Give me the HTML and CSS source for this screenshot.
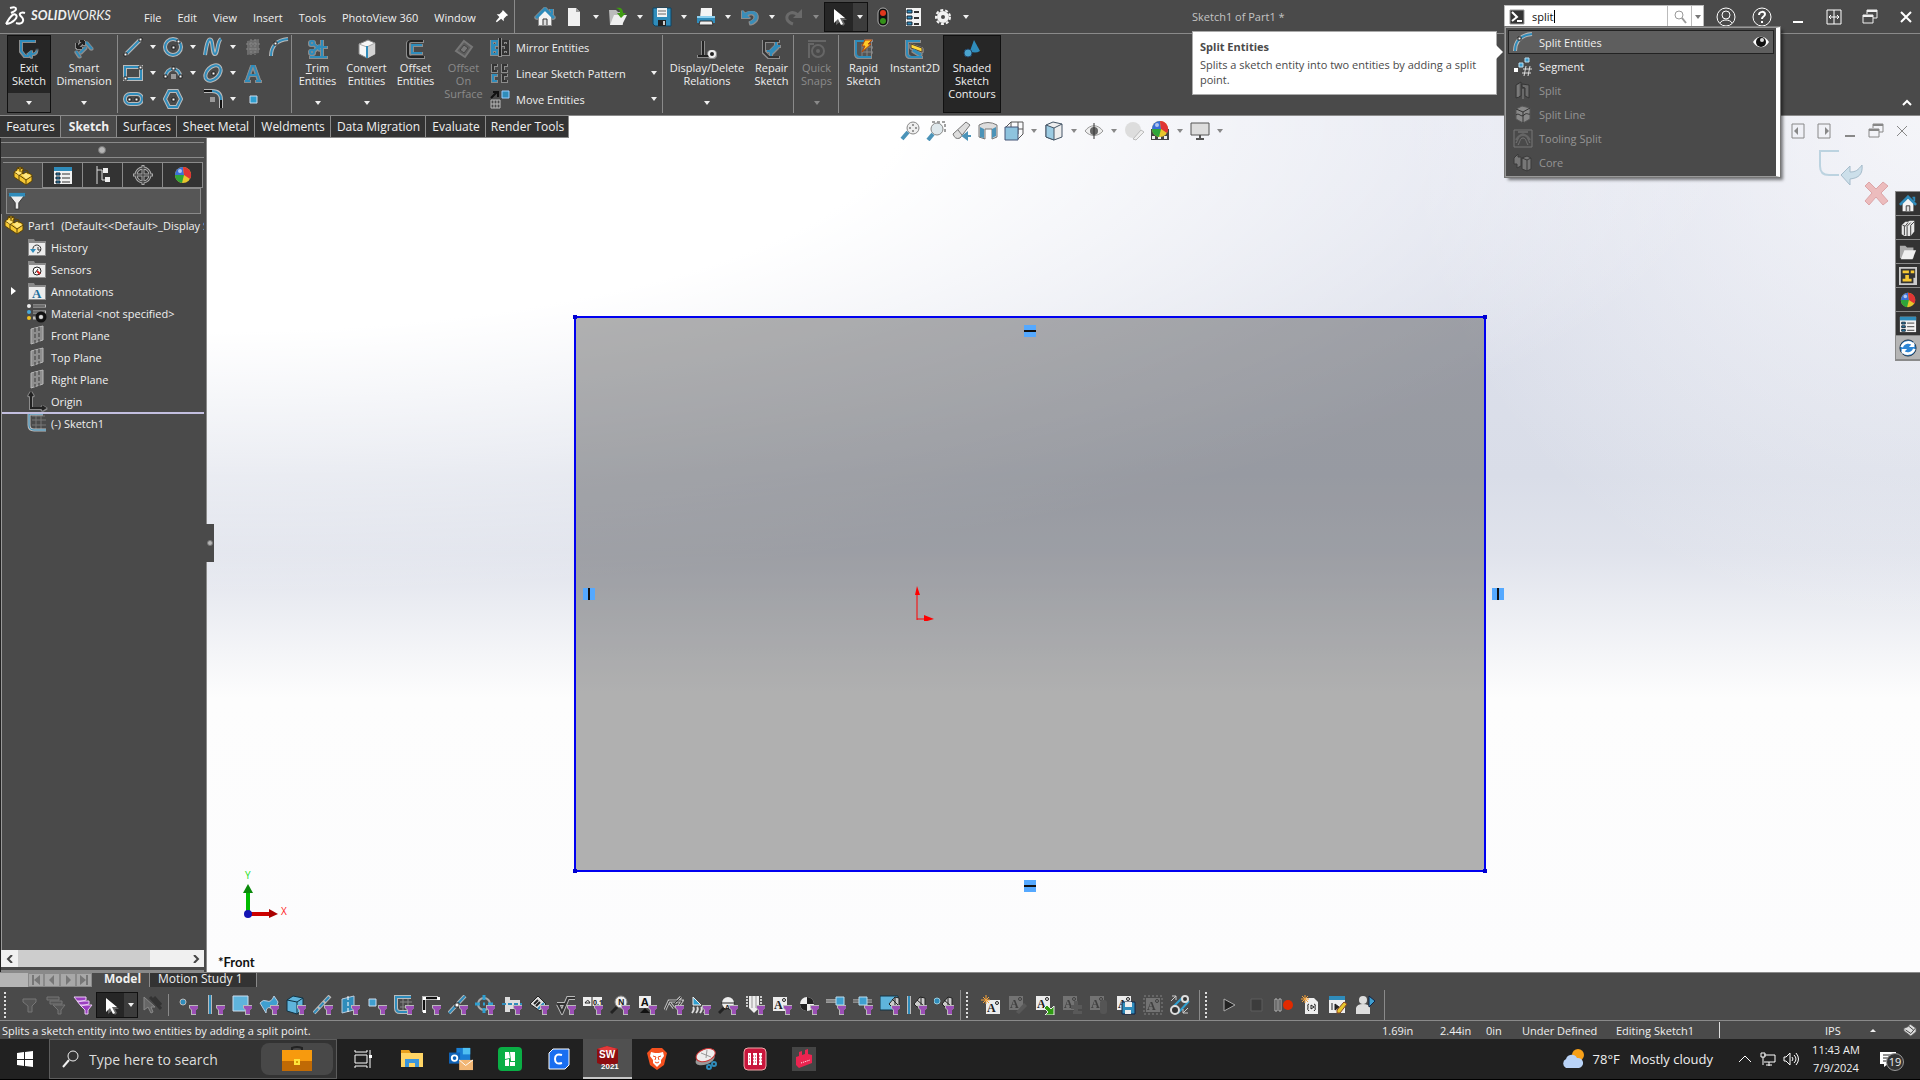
FILE: index.html
```html
<!DOCTYPE html>
<html lang="en">
<head>
  <meta charset="UTF-8">
  <meta name="viewport" content="width=device-width, initial-scale=1.0">
  <title>SOLIDWORKS - Sketch1 of Part1</title>
  <link rel="stylesheet" href="styles.css">
</head>
<body>
  <!-- icon sprite -->
  <svg class="sprite" width="0" height="0" aria-hidden="true">
    <symbol id="funnel" viewBox="0 0 20 20"><path d="M11 10h9v3l-2 2v5h-5v-5l-2-2z" fill="#b9b9b9"/><path d="M12 11h8v2l-2 2v4h-4v-4l-2-2z" fill="#9b4fb5"/></symbol>
    <symbol id="cursor" viewBox="0 0 20 20"><path d="M7 4v14l4-3 3 4 2-2-2-4h4z" fill="#666"/><path d="M5 2v14l4-4 3 6 2-1-3-6h5z" fill="#fff"/></symbol>
    <symbol id="house" viewBox="0 0 20 20"><path d="M4 9l6-6 6 6v9H4z" fill="#f4f4f4"/><path d="M8 18v-6h4v6" fill="#ddd" stroke="#333"/><path d="M1 11l9-9 9 9" fill="none" stroke="#2f8cbb" stroke-width="3"/><path d="M15 3h2v4" fill="none" stroke="#2f8cbb" stroke-width="2"/></symbol>
    <symbol id="part" viewBox="0 0 20 20"><path d="M1 6l3-2V2l3-1 3 1v6l4-2 5 3v6l-6 4L1 11z" fill="#f5c733" stroke="#5a4208"/><path d="M1 6l5 3 4-2M6 9v5M6 9l7 5 6-4M13 14v5M4 2l3 1 3-1M7 3v3M9 7V5l3-1 3 1v3l-3 1z" fill="none" stroke="#5a4208"/><path d="M2 6l3-1 4 2-3 2zM9 9l4-2 5 3-5 3z" fill="#ffe680"/></symbol>
    <symbol id="ball" viewBox="0 0 20 20"><circle cx="10" cy="10" r="8" fill="#e8c62c"/><path d="M2 10a8 8 0 0 1 8-8l1 8z" fill="#3a6fd8"/><path d="M2 10l9 0-2 8a8 8 0 0 1-7-8z" fill="#2fa53a"/><path d="M10 2a8 8 0 0 1 7 12l-6-4z" fill="#e03535"/><circle cx="7" cy="6" r="2" fill="#fff" opacity=".6"/></symbol>
    <symbol id="sheet" viewBox="0 0 20 20"><path d="M1 2h18v17H1z" fill="#f2f2f2"/><path d="M1 2h18v4H1z" fill="#2f8cbb"/><path d="M3 8h4v2H3zM3 12h4v2H3zM3 16h4v2H3z" fill="#2f8cbb" stroke="#123"/><path d="M9 9h8M9 13h8M9 17h8" stroke="#333"/></symbol>
    <symbol id="folder" viewBox="0 0 20 20"><path d="M1 5V2h6l1 2h11v15H1z" fill="#8a8a8a"/><path d="M2 6h16v12H2z" fill="#ececec"/></symbol>
    <symbol id="plane" viewBox="0 0 20 20"><path d="M4 4l12-3v14L4 19z" fill="#8e8e8e" stroke="#b8b8b8"/><path d="M8 3v15M12 2v15" stroke="#3a3a3a" stroke-dasharray="4 2"/></symbol>
    <symbol id="noteA" viewBox="0 0 20 20"><path d="M3 3h14v14H3z" fill="#ececec"/><text x="4" y="15" font-size="12" font-weight="bold" font-family="Liberation Serif" fill="#222">A</text><circle cx="14" cy="6" r="1.5" fill="none" stroke="#222"/></symbol>
    <symbol id="split" viewBox="0 0 20 20"><path d="M2 19C2 10 7 3 19 2" fill="none" stroke="#b8b8b8" stroke-width="4"/><path d="M2 19C2 10 7 3 19 2" fill="none" stroke="#2f8cbb" stroke-width="2"/><path d="M5 5h3v3H5z" fill="#fff" stroke="#222"/></symbol>
    <symbol id="restore" viewBox="0 0 20 20"><path d="M7 7V3h10v8h-4M3 8h10v8H3z" fill="none" stroke="currentColor" stroke-width="1"/><path d="M7 4h10M3 9h10" stroke="currentColor" stroke-width="2"/></symbol>
    <symbol id="magnet" viewBox="0 0 20 20"><circle cx="12" cy="7" r="5" fill="none" stroke="currentColor"/><path d="M8 11l-6 7" stroke="currentColor" stroke-width="2"/></symbol>
    <symbol id="gearlist" viewBox="0 0 20 20"><circle cx="2" cy="3" r="2" fill="#eee"/><circle cx="2" cy="9" r="2" fill="#4aa8d8"/><circle cx="2" cy="15" r="2" fill="#f0c020"/><path d="M6 3h13M6 9h13M6 15h5" stroke="#bbb" stroke-width="3"/><path d="M6 3h12M6 9h12" stroke="#222"/><circle cx="14" cy="14" r="4" fill="none" stroke="#111" stroke-width="3"/><circle cx="14" cy="14" r="2" fill="#ddd"/></symbol>
  </svg>

  <header class="title-bar">
    <div class="logo">
      <svg viewBox="0 0 22 20" width="22" height="20"><path d="M5 2c4-1 6-1 6 1s-3 3-5 4M1 18C6 9 9 7 11 9s-2 8-10 9M20 7c-3-1-6 0-5 2s4 3 3 6-4 3-7 2" fill="none" stroke="#fff" stroke-width="2"/></svg>
      <span class="logo-text"><b>SOLID</b>WORKS</span>
    </div>
    <nav class="menu">
      <a href="#">File</a><a href="#">Edit</a><a href="#">View</a><a href="#">Insert</a><a href="#">Tools</a><a href="#">PhotoView 360</a><a href="#">Window</a>
    </nav>
    <button class="pin" aria-label="Pin menu"><svg viewBox="0 0 16 16" width="14" height="14"><path d="M9 1l6 6-2 1-3 3v3L7 11l-5 4-1-1 4-5-3-3h3l3-3z" fill="#fff"/></svg></button>

    <div class="quick">
      <button class="q-icon home" aria-label="Home"><svg class="ico rim"><use href="#house"/></svg></button>
      <button class="q-icon" aria-label="New"><svg class="ico" viewBox="0 0 20 20"><path d="M4 1h8l4 4v14H4z" fill="#f0f0f0"/><path d="M12 1v4h4z" fill="#999"/></svg></button><button class="caret" aria-label="New options"></button>
      <button class="q-icon" aria-label="Open"><svg class="ico" viewBox="0 0 20 20"><path d="M1 3h7l2 2h5v13H2z" fill="#bbb"/><path d="M6 8h13l-5 10H2z" fill="#efefef"/><path d="M8 1c5-1 7 1 7 5h3l-5 5-4-5h3c0-3-1-4-4-5z" fill="#3f9a12"/></svg></button><button class="caret" aria-label="Open options"></button>
      <button class="q-icon" aria-label="Save"><svg class="ico" viewBox="0 0 20 20"><path d="M1 1h18v18H3l-2-2z" fill="#2f8cbb" stroke="#0e4463"/><path d="M5 1h10v9H5z" fill="#f4f4f4"/><path d="M6 4h8M6 7h8" stroke="#666"/><path d="M6 13h8v6H6z" fill="#222"/><path d="M11 14h2v4h-2z" fill="#ccc"/></svg></button><button class="caret" aria-label="Save options"></button>
      <button class="q-icon" aria-label="Print"><svg class="ico" viewBox="0 0 20 20"><path d="M5 1h11v10H4z" fill="#f4f4f4"/><path d="M1 10h18v6H1z" fill="#2f8cbb"/><path d="M1 9h18v2H1z" fill="#8fd0ee"/><path d="M4 14h12l1 4H3z" fill="#eee" stroke="#333"/></svg></button><button class="caret" aria-label="Print options"></button>
      <button class="q-icon" aria-label="Undo"><svg class="ico rim" viewBox="0 0 20 20"><path d="M5 8c6-5 12-2 11 3-1 3-3 4-6 5" fill="none" stroke="#3a8db8" stroke-width="3"/><path d="M2 3v8h8z" fill="#3a8db8"/></svg></button><button class="caret" aria-label="Undo options"></button>
      <button class="q-icon" aria-label="Redo" disabled><svg class="ico" viewBox="0 0 20 20"><path d="M14 8C8 3 2 7 3 12c1 3 3 4 6 5" fill="none" stroke="#6a6a6a" stroke-width="3"/><path d="M18 2v9h-9z" fill="#6a6a6a"/></svg></button><button class="caret dim" aria-label="Redo options" disabled></button>
      <div class="select-box">
        <button class="q-icon" aria-label="Select"><svg class="ico"><use href="#cursor"/></svg></button><button class="caret" aria-label="Select options"></button>
      </div>
      <button class="q-icon wide" aria-label="Rebuild"><svg class="ico" viewBox="0 0 20 20"><rect x="5" y="1" width="10" height="18" rx="5" fill="#111" stroke="#aaa"/><circle cx="10" cy="6" r="3" fill="#e0371c"/><circle cx="10" cy="14" r="3" fill="#35921a"/></svg></button>
      <button class="q-icon wide" aria-label="File properties"><svg class="ico" viewBox="0 0 20 20"><path d="M3 1h15v18H3z" fill="#f2f2f2"/><path d="M4 3h5v3H4zM4 9h5v3H4zM4 15h5v3H4z" fill="#2f8cbb" stroke="#123"/><path d="M11 5h5M11 11h5M11 17h5" stroke="#333" stroke-width="2"/></svg></button>
      <button class="q-icon wide" aria-label="Options"><svg class="ico" viewBox="0 0 20 20"><circle cx="10" cy="10" r="7" fill="none" stroke="#f2f2f2" stroke-width="2" stroke-dasharray="3 2"/><circle cx="10" cy="10" r="4" fill="none" stroke="#f2f2f2" stroke-width="4"/></svg></button><button class="caret" aria-label="Options menu"></button>
    </div>

    <div class="doc-title">Sketch1 of Part1 *</div>

    <div class="search">
      <span class="search-mode"><svg viewBox="0 0 16 16" width="16" height="16"><path d="M1 1h14v14H1z" fill="#333" stroke="#999"/><path d="M3 3l5 5-5 4M8 12h5" fill="none" stroke="#fff" stroke-width="2"/></svg></span>
      <input type="text" value="split" aria-label="Search commands">
      <button class="search-go" aria-label="Search"><svg viewBox="0 0 16 16" width="16" height="16"><circle cx="7" cy="6" r="4" fill="none" stroke="#999" stroke-width="1"/><path d="M10 9l4 5" stroke="#999" stroke-width="2"/></svg></button>
      <button class="search-caret caret" aria-label="Search scope"></button>
      <span class="text-cursor"></span>

      <ul class="results">
        <li class="active"><svg class="ico"><use href="#split"/></svg><span>Split Entities</span><svg class="eye" viewBox="0 0 16 16"><path d="M0 8c4-7 12-7 16 0-4 7-12 7-16 0z" fill="#fff"/><circle cx="8" cy="8" r="5" fill="#111"/><circle cx="9" cy="6" r="2" fill="#ddd"/></svg></li>
        <li><svg class="ico" viewBox="0 0 20 20"><path d="M1 12h4v4H1z" fill="#fff"/><path d="M6 7h4v4H6zM12 2h4v4h-4z" fill="#3f9fd0" stroke="#bde"/><path d="M10 13h9M9 17h9M13 10l-2 10M17 10l-2 10" stroke="#ddd"/></svg><span>Segment</span></li>
        <li class="off"><svg class="ico" viewBox="0 0 20 20"><path d="M3 5l5-3v14l-5 2zM9 4l7 1v13l-4-2V8l-3-1z" fill="#6c6c6c" stroke="#353535"/><path d="M10 9v10M5 5v12" stroke="#888"/></svg><span>Split</span></li>
        <li class="off"><svg class="ico" viewBox="0 0 20 20"><path d="M3 5l6-3 8 2v11l-7 4-7-4z" fill="#888" stroke="#555"/><path d="M3 5l7 3 7-4M10 8v11M3 11c3-3 5 3 8 0s4 0 6-1" fill="none" stroke="#333"/></svg><span>Split Line</span></li>
        <li class="off"><svg class="ico" viewBox="0 0 20 20"><path d="M1 2h18v17H1zM3 15c2-3 3-9 7-9s5 6 7 9M5 17c2-3 2-7 5-7s3 4 5 7" fill="none" stroke="#777"/><path d="M5 4h10M3 12c2-3 3-5 7-5s5 2 7 5" fill="none" stroke="#666" stroke-width="2"/></svg><span>Tooling Split</span></li>
        <li class="off"><svg class="ico" viewBox="0 0 20 20"><path d="M1 6l4-4v3h3v9l-4 2v-4H1zM9 6l5-2 4 2v11l-4 2-5-2z" fill="#777" stroke="#3a3a3a"/><path d="M9 6l5 2 4-2M14 8v11" fill="none" stroke="#3a3a3a"/></svg><span>Core</span></li>
      </ul>

      <div class="tip">
        <strong>Split Entities</strong>
        <p>Splits a sketch entity into two entities by adding a split point.</p>
      </div>
    </div>

    <div class="win-buttons">
      <button aria-label="Account"><svg class="ico" viewBox="0 0 20 20"><g fill="none" stroke="#fff"><circle cx="10" cy="10" r="9"/><circle cx="10" cy="8" r="4"/><path d="M4 16c2-4 10-4 12 0"/></g></svg></button>
      <button aria-label="Help"><svg class="ico" viewBox="0 0 20 20"><circle cx="10" cy="10" r="9" fill="none" stroke="#fff"/><path d="M7 8c0-4 6-4 6-1 0 3-3 2-3 5" fill="none" stroke="#fff" stroke-width="2"/><path d="M9 14h2v2H9z" fill="#fff"/></svg></button>
      <button aria-label="Minimize"><svg class="ico" viewBox="0 0 20 20"><path d="M5 15h10" stroke="#fff" stroke-width="2"/></svg></button>
      <button aria-label="Span displays"><svg class="ico" viewBox="0 0 20 20"><path d="M3 3h14v14H3zM10 3v14M5 10h10M7 8l-2 2 2 2M13 8l2 2-2 2" fill="none" stroke="#fff"/></svg></button>
      <button aria-label="Restore"><svg class="ico"><use href="#restore"/></svg></button>
      <button aria-label="Close"><svg class="ico" viewBox="0 0 20 20"><path d="M5 5l10 10M15 5L5 15" stroke="#fff" stroke-width="2"/></svg></button>
    </div>
  </header>

  <section class="ribbon">
    <div class="big exit">
      <button class="big-main"><svg class="ico rim" viewBox="0 0 20 20"><path d="M16 2H2v10l4 5h4" fill="none" stroke="#2f8cbb" stroke-width="2"/><path d="M18 9c0 4-2 5-5 5v-3l-5 4 5 4v-3c4 0 6-3 5-7z" fill="#2f8cbb"/></svg>Exit<br>Sketch</button>
      <button class="big-drop caret" aria-label="Exit Sketch options"></button>
    </div>
    <div class="big smart">
      <button class="big-main"><svg class="ico rim" viewBox="0 0 20 20"><path d="M2 12l4 6M12 3l6 7" stroke="#2f8cbb" stroke-width="2"/><path d="M3 9l7-7M3 9V4M3 9h5M10 2v4M10 2H6" stroke="#222" stroke-width="2"/><path d="M6 14l6-6" stroke="#2f8cbb" stroke-width="2"/></svg>Smart<br>Dimension</button>
      <button class="big-drop caret" aria-label="Smart Dimension options"></button>
    </div>
    <div class="rule"></div>
    <div class="sketch-grid">
      <button aria-label="Line"><svg class="ico" viewBox="0 0 20 20"><path d="M2 18L18 2" stroke="#bbb" stroke-width="4"/><path d="M2 18L18 2" stroke="#2f8cbb" stroke-width="2"/><path d="M1 16h3v3H1zM16 1h3v3h-3z" fill="#fff" stroke="#222"/></svg></button><button class="caret" aria-label="Line options"></button>
      <button aria-label="Circle"><svg class="ico" viewBox="0 0 20 20"><circle cx="10" cy="10" r="8" fill="none" stroke="#bbb" stroke-width="4"/><circle cx="10" cy="10" r="8" fill="none" stroke="#2f8cbb" stroke-width="2"/><path d="M9 9h3v3H9zM14 3h3v3h-3z" fill="#fff" stroke="#222"/></svg></button><button class="caret" aria-label="Circle options"></button>
      <button aria-label="Spline"><svg class="ico" viewBox="0 0 20 20"><path d="M2 18C4 4 6 1 8 3s1 14 4 14 2-13 6-15" fill="none" stroke="#bbb" stroke-width="4"/><path d="M2 18C4 4 6 1 8 3s1 14 4 14 2-13 6-15" fill="none" stroke="#2f8cbb" stroke-width="2"/></svg></button><button class="caret" aria-label="Spline options"></button>
      <button aria-label="Sketch plane" disabled><svg class="ico" viewBox="0 0 20 20"><path d="M4 4l12-2v14L4 18z" fill="#6d6d6d"/><path d="M3 7h15M3 12h15M8 2v16M12 2v16" stroke="#888" stroke-dasharray="2 1"/></svg></button>
      <button aria-label="Split Entities"><svg class="ico"><use href="#split"/></svg></button>

      <button aria-label="Rectangle"><svg class="ico" viewBox="0 0 20 20"><path d="M2 4h16v12H2z" fill="none" stroke="#bbb" stroke-width="4"/><path d="M2 4h16v12H2z" fill="none" stroke="#2f8cbb" stroke-width="2"/><path d="M1 14h3v3H1zM16 3h3v3h-3z" fill="#fff" stroke="#222"/></svg></button><button class="caret" aria-label="Rectangle options"></button>
      <button aria-label="Arc"><svg class="ico" viewBox="0 0 20 20"><path d="M3 13a7 7 0 0 1 14 0" fill="none" stroke="#bbb" stroke-width="4"/><path d="M3 13a7 7 0 0 1 14 0" fill="none" stroke="#2f8cbb" stroke-width="2"/><path d="M1 12h3v3H1zM16 12h3v3h-3zM9 4h3v3H9z" fill="#fff" stroke="#222"/><path d="M8 11h5v5H8z" fill="#999"/></svg></button><button class="caret" aria-label="Arc options"></button>
      <button aria-label="Ellipse"><svg class="ico" viewBox="0 0 20 20"><g transform="rotate(-45 10 10)" fill="none"><ellipse cx="10" cy="10" rx="9" ry="6" stroke="#bbb" stroke-width="4"/><ellipse cx="10" cy="10" rx="9" ry="6" stroke="#2f8cbb" stroke-width="2"/></g><path d="M9 9h3v3H9z" fill="#fff" stroke="#222"/></svg></button><button class="caret" aria-label="Ellipse options"></button>
      <button aria-label="Text"><svg class="ico rim" viewBox="0 0 20 20"><path d="M4 17L9 3h2l5 14M6 12h8M2 18h5M13 18h5" fill="none" stroke="#2f8cbb" stroke-width="2"/></svg></button>
      <span></span>

      <button aria-label="Slot"><svg class="ico" viewBox="0 0 20 20"><rect x="2" y="5" width="17" height="10" rx="5" fill="none" stroke="#bbb" stroke-width="4"/><rect x="2" y="5" width="17" height="10" rx="5" fill="none" stroke="#2f8cbb" stroke-width="2"/><path d="M5 9h3v3H5zM12 9h3v3h-3z" fill="#fff" stroke="#222"/></svg></button><button class="caret" aria-label="Slot options"></button>
      <button aria-label="Polygon"><svg class="ico" viewBox="0 0 20 20"><path d="M6 2h8l4 8-4 8H6l-4-8z" fill="none" stroke="#bbb" stroke-width="4"/><path d="M6 2h8l4 8-4 8H6l-4-8z" fill="none" stroke="#2f8cbb" stroke-width="2"/><path d="M9 9h3v3H9z" fill="#fff" stroke="#222"/></svg></button><span></span>
      <button aria-label="Fillet"><svg class="ico" viewBox="0 0 20 20"><path d="M1 2h8c6 0 9 3 9 9v8" fill="none" stroke="#bbb" stroke-width="4"/><path d="M1 2h8M18 11v8" stroke="#111" stroke-width="2"/><path d="M9 2c6 0 9 3 9 9" fill="none" stroke="#2f8cbb" stroke-width="2"/><path d="M7 8h5v5H7z" fill="#999"/></svg></button><button class="caret" aria-label="Fillet options"></button>
      <button aria-label="Point"><svg class="ico" viewBox="0 0 20 20"><path d="M7 7h7v7H7z" fill="#2f9fd0" stroke="#cde"/></svg></button>
      <span></span>
    </div>
    <div class="rule"></div>
    <div class="big w49">
      <button class="big-main"><svg class="ico rim" viewBox="0 0 20 20"><path d="M14 1v16M9 8h10M2 18h17" stroke="#2f8cbb" stroke-width="2"/><circle cx="4" cy="4" r="2" fill="none" stroke="#2f8cbb" stroke-width="2"/><circle cx="4" cy="13" r="2" fill="none" stroke="#2f8cbb" stroke-width="2"/><path d="M6 5l6 6M6 12l6-6" stroke="#2f8cbb" stroke-width="2"/></svg><u>T</u>rim<br>Entities</button>
      <button class="big-drop caret" aria-label="Trim options"></button>
    </div>
    <div class="big w49">
      <button class="big-main"><svg class="ico" viewBox="0 0 20 20"><path d="M2 5l9-4 7 3v11l-8 4-8-4z" fill="#f6f6f6" stroke="#888"/><path d="M11 7l7-3v11l-7 4z" fill="#d2d2d2"/><path d="M2 5l8 3 8-4" fill="none" stroke="#aaa"/><path d="M10 7v12" stroke="#2f8cbb" stroke-width="2"/></svg>Convert<br>Entities</button>
      <button class="big-drop caret" aria-label="Convert options"></button>
    </div>
    <div class="big w49">
      <button class="big-main"><svg class="ico rim" viewBox="0 0 20 20"><path d="M17 2H5q-3 0-3 3v10q0 3 3 3h13" fill="none" stroke="#222" stroke-width="2"/><path d="M16 6H6v8h10" fill="none" stroke="#2f8cbb" stroke-width="2"/></svg>Offset<br>Entities</button>
    </div>
    <div class="big w47">
      <button class="big-main" disabled><svg class="ico" viewBox="0 0 20 20"><path d="M10 2l8 6-7 10-9-6z" fill="#5c5c5c" stroke="#777" stroke-width="2"/><path d="M10 6l4 3-4 5-4-3z" fill="#777" stroke="#444"/></svg>Offset<br>On<br>Surface</button>
    </div>
    <div class="row-tools">
      <div><button><svg class="ico rim" viewBox="0 0 20 20"><path d="M10 1v18" stroke="#222" stroke-width="2"/><path d="M2 4h5v4H4v5h3v4H2z" fill="none" stroke="#2f8cbb" stroke-width="2"/><path d="M18 4h-5v4h3v5h-3v4h5z" fill="none" stroke="#333" stroke-width="2"/></svg>Mirror Entities</button></div>
      <div><button><svg class="ico rim" viewBox="0 0 20 20"><g fill="none" stroke="#333" stroke-width="2"><path d="M7 2H3v6h4M17 2h-4v6h4M17 12h-4v6h4"/><path d="M7 12H3v6h4" stroke="#2f8cbb"/></g></svg>Linear Sketch Pattern</button><button class="caret" aria-label="Pattern options"></button></div>
      <div><button><svg class="ico" viewBox="0 0 20 20"><path d="M1 9l6-6M3 3h5v5" fill="none" stroke="#111" stroke-width="2"/><path d="M12 2h7v7h-7z" fill="#2f8cbb" stroke="#9cf"/><path d="M1 11h9v8H1zM1 15h9M4 11v8M7 11v8" fill="none" stroke="#bbb"/></svg>Move Entities</button><button class="caret" aria-label="Move options"></button></div>
    </div>
    <div class="rule"></div>
    <div class="big w86">
      <button class="big-main"><svg class="ico rim" viewBox="0 0 20 20"><path d="M6 2v14M1 17h12" stroke="#222" stroke-width="2"/><circle cx="15" cy="15" r="3" fill="#222" stroke="#eee" stroke-width="2"/></svg>Display/Delete<br>Relations</button>
      <button class="big-drop caret" aria-label="Relations options"></button>
    </div>
    <div class="big w43">
      <button class="big-main"><svg class="ico rim" viewBox="0 0 20 20"><path d="M17 2H2v11l5 5h10" fill="none" stroke="#333" stroke-width="2"/><path d="M8 14l7-7" stroke="#2f8cbb" stroke-width="4"/><path d="M14 3v4h4M5 12h4v5" fill="none" stroke="#2f8cbb" stroke-width="2"/></svg>Repair<br>Sketch</button>
    </div>
    <div class="rule"></div>
    <div class="big w43">
      <button class="big-main" disabled><svg class="ico" viewBox="0 0 20 20"><path d="M1 2h18M1 5h6M2 5v14" fill="none" stroke="#666" stroke-width="2"/><circle cx="11" cy="12" r="6" fill="none" stroke="#666" stroke-width="2"/><circle cx="11" cy="12" r="2" fill="#666"/></svg>Quick<br>Snaps</button>
      <button class="big-drop caret dim" aria-label="Snap options" disabled></button>
    </div>
    <div class="rule"></div>
    <div class="big w47">
      <button class="big-main"><svg class="ico rim" viewBox="0 0 20 20"><path d="M17 2H2v12q0 4 4 4h11" fill="#555" stroke="#2f8cbb" stroke-width="2"/><path d="M8 8h10M8 13h10M8 5v12M13 5v12" stroke="#888"/><path d="M11 1h7l-4 4h3l-9 8 3-6H8z" fill="#ffc928" stroke="#b4480e"/></svg>Rapid<br>Sketch</button>
    </div>
    <div class="big w56">
      <button class="big-main"><svg class="ico rim" viewBox="0 0 20 20"><path d="M15 2H2v12q0 4 4 4h11" fill="none" stroke="#2f8cbb" stroke-width="2"/><path d="M6 5l11 4v4L6 9z" fill="#ffd83a" stroke="#543"/><path d="M8 11l8 5" stroke="#2f8cbb" stroke-width="3"/></svg>Instant2D</button>
    </div>
    <div class="big shaded">
      <button class="big-main"><svg class="ico" viewBox="0 0 20 20"><path d="M12 1l6 11q-5 3-10 0z" fill="#2f8cbb"/><circle cx="6" cy="14" r="4" fill="#4aa4cf" stroke="#246"/></svg>Shaded<br>Sketch<br>Contours</button>
    </div>
    <button class="collapse" aria-label="Collapse ribbon"><svg viewBox="0 0 12 8" width="12" height="8"><path d="M2 7l4-4 4 4" fill="none" stroke="#fff" stroke-width="2"/></svg></button>
  </section>

  <main class="workspace">
    <nav class="cmd-tabs">
      <a href="#" class="t60">Features</a><a href="#" class="t56 current">Sketch</a><a href="#" class="t60">Surfaces</a><a href="#" class="t78">Sheet Metal</a><a href="#" class="t76">Weldments</a><a href="#" class="t95">Data Migration</a><a href="#" class="t60">Evaluate</a><a href="#" class="t83">Render Tools</a>
    </nav>

    <aside class="panel">
      <div class="panel-top"><i class="knob"></i></div>
      <div class="panel-tabs">
        <button class="current" aria-label="FeatureManager"><svg class="ico"><use href="#part"/></svg></button>
        <button aria-label="Properties"><svg class="ico"><use href="#sheet"/></svg></button>
        <button aria-label="Configurations"><svg class="ico" viewBox="0 0 20 20"><path d="M4 1v18M4 5h5M9 5v10h3" fill="none" stroke="#ddd"/><path d="M10 3h5v5h-5zM12 12h5v5h-5z" fill="#eee"/></svg></button>
        <button aria-label="DimXpert"><svg class="ico" viewBox="0 0 20 20"><circle cx="10" cy="10" r="7" fill="none" stroke="#aaa" stroke-width="3"/><path d="M10 0v20M0 10h20" stroke="#aaa" stroke-width="3"/><circle cx="10" cy="10" r="7" fill="none" stroke="#333"/><path d="M10 1v18M1 10h18" stroke="#333"/></svg></button>
        <button aria-label="Display"><svg class="ico"><use href="#ball"/></svg></button>
      </div>
      <label class="filter">
        <svg class="ico" viewBox="0 0 20 20"><path d="M1 3h18l-7 9v7H8v-7z" fill="#eee" stroke="#333"/><path d="M1 1h18v4H1z" fill="#2f8cbb"/></svg>
        <input type="text" aria-label="Filter tree">
      </label>
      <ul class="tree">
        <li class="root"><svg class="ico"><use href="#part"/></svg>Part1 &nbsp;(Default&lt;&lt;Default&gt;_Display State 1&gt;)</li>
        <li><svg class="ico" viewBox="0 0 20 20"><use href="#folder"/><path d="M6 13a4 4 0 1 1 4 3" fill="none" stroke="#333"/><path d="M3 12l3 4 3-4z" fill="#2f8cbb"/><path d="M11 10v3h3" fill="none" stroke="#333"/></svg>History</li>
        <li><svg class="ico" viewBox="0 0 20 20"><use href="#folder"/><circle cx="10" cy="12" r="4" fill="#fff" stroke="#222"/><path d="M10 12l3 3" stroke="#d22" stroke-width="2"/><path d="M8 14l3-4" stroke="#222"/></svg>Sensors</li>
        <li class="open"><svg class="ico" viewBox="0 0 20 20"><use href="#folder"/><text x="5" y="17" font-size="13" font-weight="bold" font-family="Liberation Serif" fill="#1c6f9c">A</text></svg>Annotations</li>
        <li><svg class="ico"><use href="#gearlist"/></svg>Material &lt;not specified&gt;</li>
        <li><svg class="ico"><use href="#plane"/></svg>Front Plane</li>
        <li><svg class="ico"><use href="#plane"/></svg>Top Plane</li>
        <li><svg class="ico"><use href="#plane"/></svg>Right Plane</li>
        <li><svg class="ico rim" viewBox="0 0 20 20"><path d="M4 2v15h14M2 5l2-3 2 3M15 15l3 2-3 2" fill="none" stroke="#222" stroke-width="2"/></svg>Origin</li>
        <li class="after-bar"><svg class="ico" viewBox="0 0 20 20"><path d="M5 3h13M5 7h14M5 12h14M9 1v15M14 1v15" stroke="#777"/><path d="M16 1H2v11q0 5 5 5h12" fill="none" stroke="#bbb" stroke-width="3"/><path d="M16 1H2v11q0 5 5 5h12" fill="none" stroke="#2f8cbb"/></svg>(-) Sketch1</li>
      </ul>
      <div class="hscroll">
        <button aria-label="Scroll left"><svg viewBox="0 0 8 8" width="8" height="8"><path d="M6 0L2 4l4 4" fill="none" stroke="#444" stroke-width="2"/></svg></button>
        <div class="thumb"></div>
        <button aria-label="Scroll right"><svg viewBox="0 0 8 8" width="8" height="8"><path d="M2 0l4 4-4 4" fill="none" stroke="#444" stroke-width="2"/></svg></button>
      </div>
      <div class="panel-foot"></div>
    </aside>

    <section class="viewport">
      <div class="splitter"><i class="knob"></i></div>
      <div class="heads-up">
        <button aria-label="Zoom to fit"><svg class="ico" viewBox="0 0 20 20"><circle cx="13" cy="7" r="6" fill="#eee" stroke="#888"/><path d="M8 11l-6 7" stroke="#4b93b8" stroke-width="4"/><path d="M13 3v8M9 7h8" stroke="#444" stroke-dasharray="2 4"/></svg></button>
        <button aria-label="Zoom to area"><svg class="ico" viewBox="0 0 20 20"><path d="M6 1h13v12" fill="none" stroke="#444" stroke-dasharray="3 2"/><circle cx="11" cy="8" r="6" fill="#dfe8ec" stroke="#888"/><path d="M7 13l-5 6" stroke="#4b93b8" stroke-width="4"/></svg></button>
        <button aria-label="Previous view"><svg class="ico" viewBox="0 0 20 20"><path d="M1 13L14 1l4 3L8 17q-5 2-7-4z" fill="#ddd" stroke="#777"/><path d="M6 9l4 5" stroke="#777"/><path d="M19 15h-6M15 12l-4 3 4 3z" fill="#4b93b8" stroke="#4b93b8" stroke-width="2"/></svg></button>
        <button aria-label="Section view"><svg class="ico" viewBox="0 0 20 20"><path d="M1 4q9-5 18 0v12l-5 2V8H7v10l-6-2z" fill="#ddd" stroke="#777"/><path d="M2 6l4 2v9l-4-1zM14 8l4-2v9l-4 2z" fill="#4b93b8"/></svg></button>
        <button aria-label="View orientation"><svg class="ico" viewBox="0 0 20 20"><path d="M2 6l5-5h12v12l-5 5M14 1v12M7 1v5M8 8h11" fill="none" stroke="#555"/><path d="M1 6h13v13H1z" fill="#8ec3de" stroke="#457"/></svg></button><button class="caret" aria-label="Orientations"></button>
        <button aria-label="Display style"><svg class="ico" viewBox="0 0 20 20"><path d="M2 4l7-3 9 2v13l-8 3-8-3z" fill="#eee" stroke="#456"/><path d="M2 4l8 3v12l-8-3z" fill="#9ccbe2" stroke="#456"/><path d="M10 7l8-4" stroke="#456"/></svg></button><button class="caret" aria-label="Styles"></button>
        <button aria-label="Hide items"><svg class="ico" viewBox="0 0 20 20"><path d="M1 10c5-7 13-7 18 0-5 6-13 6-18 0z" fill="#eee" stroke="#999"/><circle cx="10" cy="10" r="4" fill="#666"/><path d="M10 2v16" stroke="#333"/></svg></button><button class="caret" aria-label="Hide options"></button>
        <button aria-label="Edit appearance" disabled><svg class="ico" viewBox="0 0 20 20"><circle cx="9" cy="9" r="8" fill="#ddd"/><path d="M9 18l8-9 3 2-8 8z" fill="#eee" stroke="#bbb"/></svg></button>
        <button aria-label="Apply scene"><svg class="ico" viewBox="0 0 20 20"><path d="M1 8h18v11H1z" fill="#444"/><path d="M2 15h3v3H2zM8 15h3v3H8zM14 15h3v3h-3z" fill="#eee"/><use href="#ball" y="-2"/></svg></button><button class="caret" aria-label="Scenes"></button>
        <button aria-label="View settings"><svg class="ico" viewBox="0 0 20 20"><path d="M1 2h18v12H1z" fill="#ddd" stroke="#555" stroke-width="1"/><path d="M10 14v4M6 18h8" stroke="#555" stroke-width="2"/></svg></button><button class="caret" aria-label="Settings menu"></button>
      </div>
      <div class="doc-buttons">
        <button aria-label="Previous pane"><svg class="ico" viewBox="0 0 20 20"><path d="M4 3h12v14H4z" fill="none" stroke="#888"/><path d="M10 6v8l-4-4z" fill="#888"/></svg></button>
        <button aria-label="Next pane"><svg class="ico" viewBox="0 0 20 20"><path d="M4 3h12v14H4z" fill="none" stroke="#888"/><path d="M11 6v8l4-4z" fill="#888"/></svg></button>
        <button aria-label="Minimize document"><svg class="ico" viewBox="0 0 20 20"><path d="M5 15h10" stroke="#888" stroke-width="2"/></svg></button>
        <button aria-label="Restore document"><svg class="ico"><use href="#restore"/></svg></button>
        <button aria-label="Close document"><svg class="ico" viewBox="0 0 20 20"><path d="M5 5l10 10M15 5L5 15" stroke="#888"/></svg></button>
      </div>
      <svg class="confirm" viewBox="0 0 72 58" width="72" height="58">
        <path d="M22 3H3v15q0 9 9 9h10" fill="none" stroke="#bcd3e0" stroke-width="2"/>
        <path d="M45 17c1 9-3 13-12 14v6L24 27l9-9v6c6 0 8-2 12-7z" fill="#ccdfea" stroke="#a6bccb"/>
        <path d="M52 34l7 7 7-7 5 4-7 7 7 8-5 4-7-8-7 8-4-4 7-8-7-7z" fill="#ecbcbd" stroke="#dca5a8"/>
      </svg>

      <div class="profile">
        <i class="dot tl"></i><i class="dot tr"></i><i class="dot bl"></i><i class="dot br"></i>
        <i class="rel h top"></i><i class="rel h bottom"></i><i class="rel v left"></i><i class="rel v right"></i>
        <svg class="origin" viewBox="0 0 20 36" width="20" height="36"><path d="M3 35V10M3 34h10" fill="none" stroke="#f00"/><path d="M3 1L1 10h5zM20 34l-10-4v7z" fill="#f00"/></svg>
      </div>

      <svg class="triad" viewBox="0 0 52 52" width="52" height="52">
        <path d="M9 40V16" stroke="#0b0" stroke-width="4"/><path d="M9 10l5 9H4z" fill="#0a8a0a"/>
        <path d="M10 40h20" stroke="#c00" stroke-width="4"/><path d="M39 40l-9-5v9z" fill="#a00"/>
        <circle cx="9" cy="40" r="4" fill="#1414b4"/>
      </svg>
      <span class="axis y">Y</span><span class="axis x">X</span>
      <span class="view-name">*Front</span>

      <div class="task-pane">
        <button aria-label="Resources"><svg class="ico"><use href="#house"/></svg></button>
        <button aria-label="Design library"><svg class="ico" viewBox="0 0 20 20"><path d="M3 7l4-4h3l2-1h5v12l-4 5H6l-3-2z" fill="#e8e8e8"/><path d="M6 8v10M9 8v11M13 7v12M4 7l3 1 3-4M9 8l4-4M13 7l4-4" fill="none" stroke="#333"/></svg></button>
        <button aria-label="File explorer"><svg class="ico" viewBox="0 0 20 20"><path d="M1 3h6l2 2h7v12H1z" fill="#aaa"/><path d="M6 8h13l-4 10H2z" fill="#efefef"/></svg></button>
        <button aria-label="View palette"><svg class="ico" viewBox="0 0 20 20"><path d="M1 1h18v18H1z" fill="#333" stroke="#ccc" stroke-width="2"/><path d="M4 4h7v3H4zM13 4h4v3h-4zM7 9h4v4h3v3H4v-3h3z" fill="#f5c733"/><path d="M16 12h3v7h-3z" fill="#ccc"/></svg></button>
        <button aria-label="Appearances"><svg class="ico"><use href="#ball"/></svg></button>
        <button aria-label="Custom properties"><svg class="ico"><use href="#sheet"/></svg></button>
        <button class="lit" aria-label="Forum"><svg class="ico" viewBox="0 0 20 20"><circle cx="10" cy="10" r="9" fill="#2c86d6" stroke="#234"/><path d="M3 9c2-6 10-7 13-2M17 11c-2 6-10 7-13 2" fill="none" stroke="#fff" stroke-width="3"/><path d="M17 3v6h-6zM3 17v-6h6z" fill="#fff"/></svg></button>
      </div>
    </section>
  </main>

  <nav class="sheet-tabs">
    <div class="sheet-blank"></div>
    <div class="sheet-nav">
      <button aria-label="First"><svg viewBox="0 0 12 12" width="12" height="12"><path d="M3 1v10" stroke="#777" stroke-width="2"/><path d="M10 1v10L4 6z" fill="#777"/></svg></button>
      <button aria-label="Previous"><svg viewBox="0 0 12 12" width="12" height="12"><path d="M8 1v10L3 6z" fill="#777"/></svg></button>
      <button aria-label="Next"><svg viewBox="0 0 12 12" width="12" height="12"><path d="M4 1v10l5-5z" fill="#777"/></svg></button>
      <button aria-label="Last"><svg viewBox="0 0 12 12" width="12" height="12"><path d="M9 1v10" stroke="#777" stroke-width="2"/><path d="M2 1v10l6-5z" fill="#777"/></svg></button>
    </div>
    <a href="#" class="model">Model</a>
    <a href="#" class="motion">Motion Study 1</a>
  </nav>

  <div class="filter-bar">
    <i class="grip"></i>
    <button class="first" aria-label="Filter toggle" disabled><svg class="ico" viewBox="0 0 20 20"><path d="M4 4h13v3l-4 4v6H9v-6L4 7z" fill="#555" stroke="#777"/></svg></button>
    <button aria-label="Clear filters" disabled><svg class="ico" viewBox="0 0 20 20"><path d="M1 2h12v3H1zM4 6h12v3H4zM7 10h12l-4 5v4h-3v-4z" fill="#555" stroke="#777"/></svg></button>
    <button aria-label="All filters"><svg class="ico" viewBox="0 0 20 20"><path d="M1 2h12v3l-8 2zM4 6h12v3l-8 2zM7 10h12l-4 5v4h-3v-4z" fill="#9a3fc0" stroke="#eacbf5"/></svg></button>
    <div class="select-box small">
      <button aria-label="Select"><svg class="ico"><use href="#cursor"/></svg></button><button class="caret" aria-label="Select modes"></button>
    </div>
    <button aria-label="Magnified select" disabled><svg class="ico" viewBox="0 0 20 20"><path d="M2 2v13l4-3 3 6 2-1-2-5h4z" fill="#666" stroke="#888"/><path d="M8 2l11 12M12 2l7 8" stroke="#333" stroke-width="3"/></svg></button>
    <i class="bar-rule"></i>
    <button aria-label="Filter vertices"><svg class="ico" viewBox="0 0 20 20"><circle cx="5" cy="7" r="3" fill="#2f8cbb" stroke="#bbb"/><use href="#funnel"/></svg></button>
    <button aria-label="Filter edges"><svg class="ico" viewBox="0 0 20 20"><path d="M5 0v19" stroke="#bbb" stroke-width="4"/><path d="M5 0v19" stroke="#2f8cbb" stroke-width="2"/><use href="#funnel"/></svg></button>
    <button aria-label="Filter faces"><svg class="ico" viewBox="0 0 20 20"><path d="M1 1h15v15H1z" fill="#5fb4dc" stroke="#cde"/><use href="#funnel"/></svg></button>
    <button aria-label="Filter surface bodies"><svg class="ico" viewBox="0 0 20 20"><path d="M1 8q3-4 7-2t7-5l4 6q-2 8-7 6t-5 5z" fill="#3f9fd0" stroke="#bcd"/><use href="#funnel"/></svg></button>
    <button aria-label="Filter solid bodies"><svg class="ico" viewBox="0 0 20 20"><path d="M1 5l6-4 10 2v11l-6 5-10-3z" fill="#5fb4dc" stroke="#134"/><path d="M1 5l10 2 6-4M11 7v12" fill="none" stroke="#134"/><use href="#funnel"/></svg></button>
    <button aria-label="Filter axes"><svg class="ico" viewBox="0 0 20 20"><path d="M1 18L17 1" stroke="#bbb" stroke-width="4"/><path d="M1 18L17 1" stroke="#2f8cbb" stroke-width="2" stroke-dasharray="6 2"/><use href="#funnel"/></svg></button>
    <button aria-label="Filter planes"><svg class="ico" viewBox="0 0 20 20"><path d="M2 4l12-3v14L2 18z" fill="#2f8cbb" stroke="#bcd"/><path d="M8 1v17" stroke="#fff" stroke-dasharray="4 2"/><use href="#funnel"/></svg></button>
    <button aria-label="Filter sketch points"><svg class="ico" viewBox="0 0 20 20"><path d="M2 4h7v7H2z" fill="#3f9fd0" stroke="#cde"/><use href="#funnel"/></svg></button>
    <button aria-label="Filter sketches"><svg class="ico" viewBox="0 0 20 20"><path d="M6 7h12M6 12h12M9 4v12M14 4v12" stroke="#888"/><path d="M17 2H2v11q0 4 4 4h10" fill="none" stroke="#bbb" stroke-width="4"/><path d="M17 2H2v11q0 4 4 4h10" fill="none" stroke="#2f8cbb" stroke-width="2"/><use href="#funnel"/></svg></button>
    <button aria-label="Filter sketch segments"><svg class="ico" viewBox="0 0 20 20"><path d="M3 17V3h14" fill="none" stroke="#bbb" stroke-width="4"/><path d="M3 17V3h14" fill="none" stroke="#111" stroke-width="2"/><path d="M2 2h3v3H2zM16 2h3v3h-3zM2 15h3v3H2z" fill="#fff"/><use href="#funnel"/></svg></button>
    <button aria-label="Filter midpoints"><svg class="ico" viewBox="0 0 20 20"><path d="M1 18L17 1" stroke="#bbb" stroke-width="4"/><path d="M1 18L17 1" stroke="#2f8cbb" stroke-width="2"/><path d="M7 8h4v4H7z" fill="#fff" stroke="#222"/><use href="#funnel"/></svg></button>
    <button aria-label="Filter center marks"><svg class="ico" viewBox="0 0 20 20"><circle cx="9" cy="9" r="6" fill="none" stroke="#aaa" stroke-width="2"/><path d="M9 0v5M9 13v5M0 9h5M13 9h5M8 9h2" stroke="#2f9fd0" stroke-width="3"/><use href="#funnel"/></svg></button>
    <button aria-label="Filter centerlines"><svg class="ico" viewBox="0 0 20 20"><path d="M3 2h5v3h10v9H8v3H3z" fill="#ddd"/><path d="M0 9h20" stroke="#2f8cbb" stroke-width="2" stroke-dasharray="4 2"/><use href="#funnel"/></svg></button>
    <button aria-label="Filter dimensions"><svg class="ico" viewBox="0 0 20 20"><path d="M1 9l8-8 8 8-6 7z" fill="#ddd" stroke="#222"/><path d="M5 9l4-4M7 11l4-4" stroke="#222" stroke-width="2"/><path d="M9 14l6-6" stroke="#2f8cbb" stroke-width="2"/><use href="#funnel"/></svg></button>
    <button aria-label="Filter surface finish"><svg class="ico" viewBox="0 0 20 20"><path d="M1 9h8M2 9l4 8 6-14h7" fill="none" stroke="#bbb" stroke-width="4"/><path d="M1 9h8M2 9l4 8 6-14h7" fill="none" stroke="#333" stroke-width="2"/><use href="#funnel"/></svg></button>
    <button aria-label="Filter tolerances"><svg class="ico" viewBox="0 0 20 20"><path d="M0 2h19v9H0z" fill="#eee"/><path d="M9 2v9M2 8h5q-2-5-5 0" fill="none" stroke="#222"/><text x="10" y="10" font-size="7" font-weight="bold" fill="#222">0.1</text><use href="#funnel"/></svg></button>
    <button aria-label="Filter notes"><svg class="ico" viewBox="0 0 20 20"><path d="M8 11l-7 7" stroke="#222" stroke-width="3"/><circle cx="11" cy="7" r="6" fill="#eee" stroke="#888"/><text x="8" y="10" font-size="8" font-weight="bold" fill="#222">N</text><use href="#funnel"/></svg></button>
    <button aria-label="Filter datums"><svg class="ico" viewBox="0 0 20 20"><path d="M2 1h12v12H2z" fill="#eee"/><text x="4" y="11" font-size="11" font-weight="bold" fill="#111">A</text><path d="M8 13l5 5H3z" fill="#111"/><use href="#funnel"/></svg></button>
    <button aria-label="Filter weld symbols"><svg class="ico" viewBox="0 0 20 20"><path d="M1 15l4-9h13l-4 6M6 8l4 5M17 2l-6 6" fill="none" stroke="#bbb" stroke-width="3"/><path d="M1 15l4-9h13l-4 6M6 8l4 5M17 2l-6 6" fill="none" stroke="#333"/><use href="#funnel"/></svg></button>
    <button aria-label="Filter weld beads"><svg class="ico" viewBox="0 0 20 20"><path d="M2 2v8h8z" fill="#2f9fd0" stroke="#eee"/><path d="M1 18q3-4 1-6M5 18q3-4 1-6M9 18q3-4 1-6M13 18q3-4 1-6" fill="none" stroke="#ddd" stroke-width="2"/><use href="#funnel"/></svg></button>
    <button aria-label="Filter datum targets"><svg class="ico" viewBox="0 0 20 20"><path d="M7 12l-6 6" stroke="#222" stroke-width="3"/><circle cx="10" cy="8" r="6" fill="#eee"/><path d="M3 8h14" stroke="#222"/><text x="7" y="15" font-size="7" font-weight="bold" fill="#222">A1</text><use href="#funnel"/></svg></button>
    <button aria-label="Filter threads"><svg class="ico" viewBox="0 0 20 20"><path d="M4 1h10v12l-5 5-5-5z" fill="#eee"/><path d="M2 1v12M16 1v12" stroke="#ccc" stroke-width="2" stroke-dasharray="2 1"/><path d="M7 1v12M11 1v12" stroke="#999"/><use href="#funnel"/></svg></button>
    <button aria-label="Filter blocks"><svg class="ico" viewBox="0 0 20 20"><use href="#noteA" x="-2" y="-1"/><use href="#funnel"/></svg></button>
    <button aria-label="Filter mass points"><svg class="ico" viewBox="0 0 20 20"><circle cx="8" cy="9" r="7" fill="#eee"/><path d="M8 2a7 7 0 0 1 7 7H8zM8 16a7 7 0 0 1-7-7h7z" fill="#222"/><use href="#funnel"/></svg></button>
    <button aria-label="Filter connection points"><svg class="ico" viewBox="0 0 20 20"><path d="M0 6h10" stroke="#eee" stroke-width="3"/><path d="M0 6h10" stroke="#222"/><path d="M10 2h8v8h-8z" fill="#3f9fd0" stroke="#bde"/><use href="#funnel"/></svg></button>
    <button aria-label="Filter routing points"><svg class="ico" viewBox="0 0 20 20"><path d="M0 6h19" stroke="#ccc" stroke-width="3"/><path d="M0 6h19" stroke="#222"/><path d="M6 2h8v8H6z" fill="#3f9fd0" stroke="#bde"/><use href="#funnel"/></svg></button>
    <button aria-label="Filter mesh facets"><svg class="ico" viewBox="0 0 20 20"><path d="M0 1h18v14H0z" fill="#5fb4dc" stroke="#134"/><path d="M9 9l6-7 4 1v8l-7 1z" fill="#ccc" stroke="#222"/><path d="M12 4l6 6M15 2v9" stroke="#222"/><use href="#funnel"/></svg></button>
    <button aria-label="Filter mesh edges"><svg class="ico" viewBox="0 0 20 20"><path d="M2 1v18" stroke="#bbb" stroke-width="4"/><path d="M2 1v18" stroke="#2f8cbb" stroke-width="2"/><path d="M7 9l6-7 5 1v8l-8 1z" fill="#ccc" stroke="#222"/><path d="M10 5l7 6M14 2v9" stroke="#222"/><use href="#funnel"/></svg></button>
    <button aria-label="Filter mesh vertices"><svg class="ico" viewBox="0 0 20 20"><circle cx="3" cy="6" r="3" fill="#2f8cbb" stroke="#9cd"/><path d="M8 9l6-7 4 1v8l-7 1z" fill="#ccc" stroke="#222"/><path d="M10 5l7 6M14 2v9" stroke="#222"/><use href="#funnel"/></svg></button>
    <i class="bar-rule tall"></i><i class="grip"></i>
    <button class="first" aria-label="Make block"><svg class="ico" viewBox="0 0 20 20"><use href="#noteA" x="2" y="2"/><path d="M5 0v9M0 5h9M2 2l6 6M8 2L2 8" stroke="#f7a33a"/></svg></button>
    <button aria-label="Edit block" disabled><svg class="ico faded" viewBox="0 0 20 20"><use href="#noteA" x="-2" y="-2"/><path d="M8 17l8-9 3 3-8 8z" fill="#888"/></svg></button>
    <button aria-label="Insert block"><svg class="ico" viewBox="0 0 20 20"><use href="#noteA" x="-2" y="-2"/><path d="M12 10l4 4 3-3v9h-9l3-3-4-4z" fill="#2f9a12" stroke="#eee"/></svg></button>
    <button aria-label="Add to block" disabled><svg class="ico faded" viewBox="0 0 20 20"><use href="#noteA" x="-2" y="-2"/><path d="M12 6h4v4h4v4h-4v2h4v3h-9v-3h1v-2H9v-4h3z" fill="#888"/></svg></button>
    <button aria-label="Rebuild block" disabled><svg class="ico faded" viewBox="0 0 20 20"><use href="#noteA" x="-2" y="-2"/><rect x="11" y="5" width="7" height="14" rx="3" fill="#777"/></svg></button>
    <button aria-label="Save block"><svg class="ico" viewBox="0 0 20 20"><use href="#noteA" x="-2" y="-2"/><path d="M6 7h13v12H6z" fill="#2f8cbb" stroke="#124"/><path d="M9 7h7v5H9zM9 15h6v4H9z" fill="#eee"/></svg></button>
    <button aria-label="Explode block" disabled><svg class="ico faded" viewBox="0 0 20 20"><use href="#noteA"/><path d="M1 1h18v18H1z" fill="none" stroke="#bbb" stroke-width="2" stroke-dasharray="2 2"/></svg></button>
    <button aria-label="Belt chain"><svg class="ico" viewBox="0 0 20 20"><path d="M2 13L13 2M8 18L19 6" stroke="#2f9fd0" stroke-width="2"/><circle cx="5" cy="15" r="4" fill="#333" stroke="#ddd" stroke-width="2"/><circle cx="15" cy="4" r="3" fill="#333" stroke="#ddd" stroke-width="2"/><path d="M1 6l5-5M2 1h4v4M13 18l5-5M18 18h-5v-4" fill="none" stroke="#ccc"/></svg></button>
    <i class="bar-rule tall gap"></i><i class="grip"></i>
    <button class="first" aria-label="Run macro"><svg class="ico" viewBox="0 0 20 20"><path d="M4 4l11 6-11 6z" fill="#222" stroke="#aaa"/></svg></button>
    <button aria-label="Stop macro" disabled><svg class="ico" viewBox="0 0 20 20"><path d="M4 4h11v12H4z" fill="#3c3c3c" stroke="#5c5c5c"/></svg></button>
    <button aria-label="Record macro"><svg class="ico" viewBox="0 0 20 20"><path d="M1 4h2v12H1zM5 4h2v12H5z" fill="#222" stroke="#bbb"/><circle cx="14" cy="10" r="5" fill="#e02a00"/></svg></button>
    <button aria-label="New macro"><svg class="ico" viewBox="0 0 20 20"><path d="M4 3h9l4 4v12H4z" fill="#eee"/><path d="M8 9q-2 0-1 3-1 3 1 4M13 9q2 0 1 3 1 3-1 4M10 10l3 2-3 2z" fill="none" stroke="#222"/><path d="M4 0v8M0 4h8M1 1l6 6M7 1L1 7" stroke="#f7a33a"/></svg></button>
    <button aria-label="Edit macro"><svg class="ico" viewBox="0 0 20 20"><path d="M1 1h16v17H1z" fill="#eee"/><path d="M1 1h16v4H1z" fill="#2f8cbb"/><path d="M4 8v7M7 9l4 3-4 3z" stroke="#222" fill="#222"/><path d="M9 15l7-8 3 2-7 9H9z" fill="#e8c62c" stroke="#842"/></svg></button>
    <button aria-label="Assign macro"><svg class="ico" viewBox="0 0 20 20"><circle cx="8" cy="5" r="4" fill="#ddd"/><path d="M1 19v-6q1-4 7-4t7 4v6z" fill="#ddd"/><path d="M14 1l6 5-6 6z" fill="#3f9fd0" stroke="#124"/></svg></button>
    <i class="bar-rule tall gap"></i>
  </div>

  <footer class="status">
    <span class="hint">Splits a sketch entity into two entities by adding a split point.</span>
    <span class="s58">1.69in</span><span class="s46">2.44in</span><span class="s36">0in</span><span class="s94">Under Defined</span><span class="s103">Editing Sketch1</span>
    <i></i>
    <span class="units">IPS</span>
    <button class="unit-caret" aria-label="Unit system"></button>
    <svg class="tag" viewBox="0 0 16 16" width="14" height="14"><path d="M1 6l5-2 2-3 7 5v4l-6 5-8-6z" fill="#ddd" stroke="#555"/><path d="M3 8l6 4 5-6M7 4l5 4" fill="none" stroke="#333"/></svg>
  </footer>

  <div class="taskbar">
    <button class="start" aria-label="Start"><svg viewBox="0 0 16 16" width="16" height="16"><path d="M0 2l7-1v7H0zM8 1l8-1v8H8zM0 9h7v6l-7-1zM8 9h8v7l-8-1z" fill="#fff"/></svg></button>
    <label class="os-search">
      <svg class="ico"><use href="#magnet"/></svg>
      <input type="text" placeholder="Type here to search" aria-label="Type here to search">
      <span class="pill"><svg viewBox="0 0 32 26" width="32" height="26"><path d="M11 4V2q5-2 10 0v2" fill="none" stroke="#222" stroke-width="2"/><path d="M1 4h30v21H1z" fill="#c06a05"/><path d="M1 4h30v11H1z" fill="#f79a0e"/><path d="M13 13h6v6h-6z" fill="#ffe23a"/><path d="M15 15h2v2h-2z" fill="#d99a00"/></svg></span>
    </label>
    <div class="apps">
      <button aria-label="Task view"><svg class="app-ico" viewBox="0 0 24 24"><path d="M4 8h12v8H4zM4 3v2h12V3M4 21v-2h12v2" fill="none" stroke="#fff" stroke-width="1"/><path d="M19 3v18" stroke="#fff"/><path d="M18 8h3v3h-3z" fill="#fff"/></svg></button>
      <button aria-label="File Explorer"><svg class="app-ico" viewBox="0 0 24 24"><path d="M1 3h8l2 3h12v14H1z" fill="#e9a21f"/><path d="M1 6h22v14H1z" fill="#ffd565"/><path d="M5 20v-8h14v8h-4v-4H9v4z" fill="#3b96dc"/></svg></button>
      <button aria-label="Outlook"><svg class="app-ico" viewBox="0 0 26 26"><path d="M8 1h15v14H8z" fill="#1a7fd4"/><path d="M15 1h8v7h-8z" fill="#4fc0f2"/><path d="M0 6h12v12H0z" fill="#0f62b6"/><circle cx="6" cy="12" r="3" fill="none" stroke="#fff" stroke-width="2"/><path d="M11 14h15v11H11z" fill="#f2b674"/><path d="M11 14l7 6 8-6" fill="none" stroke="#fff"/></svg></button>
      <button aria-label="Planner"><svg class="app-ico" viewBox="0 0 24 24"><rect width="24" height="24" rx="4" fill="#0aae45"/><path d="M7 5h4l1 6-5 1zM12 5h5v9h-4zM7 13l4-1v7H7zM12 15h5v4h-5z" fill="#fff"/></svg></button>
      <button aria-label="Cura"><svg class="app-ico" viewBox="0 0 24 24"><path d="M6 2h16v16l-4 4H2V6z" fill="#196ef0" stroke="#fff"/><path d="M15 8q-7-2-7 4t7 4" fill="none" stroke="#fff" stroke-width="2"/></svg></button>
      <button class="running" aria-label="SOLIDWORKS 2021"><svg class="app-ico" viewBox="0 0 24 24"><path d="M1 3l10-3 11 3v14l-10 4L1 17z" fill="#8e0d10"/><path d="M1 3l10-3 11 3-10 3z" fill="#e23a3a"/><text x="3" y="12" font-size="10" font-weight="bold" font-family="Liberation Sans" fill="#fff">SW</text><text x="5" y="23" font-size="8" font-weight="bold" font-family="Liberation Sans" fill="#fff">2021</text></svg></button>
      <button aria-label="Brave"><svg class="app-ico" viewBox="0 0 24 24"><path d="M7 1h10l5 5-3 12-7 5-7-5L2 6z" fill="#f4501e"/><path d="M6 5l4 1h4l4-1 1 4-3 4v3l-4 4-4-4v-3L5 9z" fill="#fff"/><path d="M8 9l3 1-1 3M16 9l-3 1 1 3M10 15l2 1 2-1" stroke="#f4501e" fill="none"/></svg></button>
      <button aria-label="Snipping Tool"><svg class="app-ico" viewBox="0 0 24 24"><ellipse cx="10" cy="12" rx="10" ry="5" transform="rotate(-20 12 9)" fill="#999"/><ellipse cx="12" cy="8" rx="10" ry="6" transform="rotate(-20 12 9)" fill="#eee" stroke="#c33"/><path d="M7 6l10 4M13 3l-1 8" stroke="#999"/><circle cx="15" cy="20" r="2" fill="none" stroke="#2f8cbb" stroke-width="2"/><circle cx="20" cy="17" r="2" fill="none" stroke="#2f8cbb" stroke-width="2"/></svg></button>
      <button aria-label="Nesting"><svg class="app-ico" viewBox="0 0 24 24"><rect x="1" y="1" width="22" height="22" rx="4" fill="#c9163c" stroke="#eaa"/><path d="M5 6h3v12H5zM10 6h4v12h-4zM16 6h3v12h-3z" fill="#fff"/><path d="M4 9h16M4 12h16M4 15h16" stroke="#c9163c" stroke-dasharray="1 1"/></svg></button>
      <button aria-label="Factory"><svg class="app-ico" viewBox="0 0 24 24"><path d="M0 0h24v24H0z" fill="#454545"/><path d="M4 10l3-1V5l3-1v4l3-1V3l3-1v5l4 1v8L7 21l-3-3z" fill="#ec2450"/><path d="M9 16l9-3" stroke="#fff" stroke-dasharray="1 1"/></svg></button>
    </div>
    <div class="tray">
      <svg class="weather" viewBox="0 0 24 24" width="24" height="24"><circle cx="17" cy="8" r="6" fill="#f7a018"/><path d="M5 21a5 5 0 0 1 0-9 6 6 0 0 1 11-1 5 5 0 0 1 2 10z" fill="#b9d3f7"/></svg>
      <span class="temp">78°F</span><span class="sky">Mostly cloudy</span>
      <button aria-label="Hidden icons"><svg viewBox="0 0 16 16" width="16" height="16"><path d="M2 11l6-6 6 6" fill="none" stroke="#fff" stroke-width="1"/></svg></button>
      <button aria-label="Network"><svg viewBox="0 0 16 16" width="16" height="16"><path d="M4 4h11v7H4M9 11v4M6 14h6M1 2h4v4H1zM3 6v8" fill="none" stroke="#fff"/></svg></button>
      <button aria-label="Volume"><svg viewBox="0 0 16 16" width="16" height="16"><path d="M1 6h2l4-4v12l-4-4H1zM9 6q2 2 0 4M11 4q4 4 0 8M13 2q5 6 0 12" fill="none" stroke="#fff"/></svg></button>
      <div class="clock">11:43 AM<br>7/9/2024</div>
      <button class="notify" aria-label="Notifications"><svg viewBox="0 0 16 16" width="16" height="16"><path d="M0 1h16v12H8l-4 3v-3H0z" fill="#fff"/><path d="M3 4h10M3 7h10M3 10h7" stroke="#222"/></svg><span class="count">19</span></button>
    </div>
  </div>
</body>
</html>
```

FILE: styles.css
```css
* {
  box-sizing: border-box;
}

body {
  margin: 0;
  height: 100vh;
  display: flex;
  flex-direction: column;
  overflow: hidden;
  font-family: 'Segoe UI', 'Open Sans', 'Noto Sans', sans-serif;
  font-size: 11px;
  line-height: 13px;
  color: #f0f0f0;
  background: #4a4a4a;
}

button {
  font: inherit;
  color: inherit;
  background: none;
  border: 0;
  padding: 0;
  display: flex;
  align-items: center;
  justify-content: center;
}

a {
  color: inherit;
  text-decoration: none;
}

ul {
  list-style: none;
  margin: 0;
  padding: 0;
}

svg {
  display: block;
  flex: none;
}

.sprite {
  display: none;
}

.ico {
  width: 20px;
  height: 20px;
}

/* thin grey rim round the blue line icons */
.rim {
  filter: drop-shadow(1px 0 0 #8c8c8c) drop-shadow(-1px 0 0 #8c8c8c) drop-shadow(0 1px 0 #8c8c8c);
}

.faded {
  opacity: 0.25;
}

.caret::after {
  content: "";
  border: 3px solid transparent;
  border-top: 4px solid #f0f0f0;
  border-bottom: 0;
}

.caret.dim::after {
  border-top-color: #8a8a8a;
}

.knob {
  width: 8px;
  height: 8px;
  border-radius: 50%;
  background: #b5b5b5;
  border: 1px solid #777;
}

/* title bar */
.title-bar {
  height: 34px;
  flex: none;
  display: flex;
  align-items: stretch;
  padding-bottom: 5px;
  border-bottom: 1px solid #8a8a8a;
}

.logo {
  width: 136px;
  padding: 3px 0 0 5px;
  display: flex;
  align-items: center;
  gap: 4px;
}

.logo-text {
  font-size: 13px;
  font-style: italic;
  font-family: Lato, sans-serif;
}

.menu {
  display: flex;
  align-items: center;
  padding-top: 6px;
}

.menu a {
  padding: 0 8px;
}

.pin {
  width: 24px;
  margin-left: 6px;
  padding-top: 4px;
}

.quick {
  display: flex;
  margin-bottom: -5px;
  padding-left: 15px;
  border-left: 1px solid #8a8a8a;
}

.q-icon {
  width: 28px;
}

.q-icon.home,
.q-icon.wide {
  width: 30px;
}

.quick .caret {
  width: 16px;
}

.select-box {
  display: flex;
  margin: 2px 0 1px;
  background: #262626;
  border: 1px solid #111;
}

.quick .select-box {
  width: 44px;
}

.quick .select-box .caret {
  width: 14px;
  background: #3c3c3c;
}

.doc-title {
  width: 312px;
  margin-left: auto;
  padding-top: 10px;
  color: #c4c4c4;
}

.search {
  position: relative;
  width: 200px;
  height: 23px;
  margin: 5px 6px 0 0;
  display: flex;
  align-items: center;
  background: #fff;
  border: 1px solid #bbb;
}

.search-mode {
  padding: 0 3px 0 4px;
}

.search input {
  flex: 1;
  min-width: 0;
  height: 21px;
  padding: 0 4px;
  border: 0;
  font: inherit;
  color: #111;
}

.search-go {
  width: 24px;
  height: 21px;
  border-left: 1px solid #bbb;
}

.search-caret {
  width: 12px;
  height: 21px;
  border-left: 1px solid #bbb;
}

.search-caret::after {
  border-top-color: #777;
}

.text-cursor {
  position: absolute;
  left: 49px;
  top: 4px;
  width: 1px;
  height: 13px;
  background: #000;
}

.results {
  position: absolute;
  z-index: 5;
  left: 0;
  top: 21px;
  width: 275px;
  padding: 2px;
  background: #4a4a4a;
  border: 1px solid #999;
  border-right: 4px solid #fff;
  outline: 1px solid #777;
  box-shadow: 3px 3px 3px rgba(0, 0, 0, 0.5);
}

.results li {
  height: 24px;
  display: flex;
  align-items: center;
  padding: 0 4px;
  gap: 6px;
  border: 1px solid transparent;
}

.results .active {
  background: #5e5e5e;
  border-color: #222;
}

.results .off {
  color: #959595;
}

.eye {
  width: 16px;
  height: 16px;
  margin-left: auto;
}

.tip {
  position: absolute;
  z-index: 5;
  right: 206px;
  top: 25px;
  width: 305px;
  height: 64px;
  padding: 7px;
  color: #4a4a4a;
  background: #fff;
  border: 1px solid #aaa;
  line-height: 15px;
}

.tip::after {
  content: "";
  position: absolute;
  right: -7px;
  top: 13px;
  border: 7px solid transparent;
  border-left-color: #fff;
  border-right: 0;
}

.tip strong {
  line-height: 13px;
}

.tip p {
  margin: 3px 0 0;
}

.win-buttons {
  display: flex;
  gap: 4px;
  margin-right: -2px;
}

.win-buttons button {
  width: 32px;
  padding-top: 5px;
}

/* ribbon */
.ribbon {
  height: 82px;
  flex: none;
  display: flex;
  padding: 0 0 2px 7px;
  border-bottom: 1px solid #8a8a8a;
}

.rule {
  width: 1px;
  margin: 1px 1px 0 0;
  background: #8a8a8a;
}

.big {
  display: flex;
  flex-direction: column;
  justify-content: space-between;
}

.big-main {
  display: block;
  padding: 5px 0 6px;
  text-align: center;
  white-space: nowrap;
}

.big-main svg {
  margin: 0 auto 2px;
}

.big-main:disabled {
  color: #8a8a8a;
}

.big-drop {
  height: 21px;
}

.exit {
  width: 44px;
  margin-top: 1px;
  border: 1px solid #111;
}

.exit .big-main {
  background: #262626;
  padding-top: 3px;
}

.smart {
  width: 66px;
}

.w43 {
  width: 43px;
}

.w47 {
  width: 47px;
}

.w49 {
  width: 49px;
}

.w56 {
  width: 56px;
}

.w86 {
  width: 86px;
}

.shaded {
  width: 58px;
  margin-top: 1px;
  background: #262626;
  border: 1px solid #111;
}

.shaded .big-main {
  padding-top: 3px;
}

.sketch-grid {
  display: grid;
  grid-template-columns: 28px 12px 28px 12px 28px 12px 28px 24px;
  grid-template-rows: repeat(3, 26px);
}

.row-tools {
  width: 175px;
  padding-left: 3px;
}

.row-tools div {
  height: 26px;
  display: flex;
  justify-content: space-between;
}

.row-tools button {
  gap: 6px;
}

.row-tools .caret {
  width: 16px;
}

.collapse {
  margin: auto 7px 7px auto;
}

/* workspace */
.workspace {
  flex: 1;
  min-height: 0;
  display: grid;
  grid-template-columns: 207px 1fr;
  grid-template-rows: 22px minmax(0, 1fr);
}

.cmd-tabs {
  grid-column: 1 / 3;
  grid-row: 1;
  justify-self: start;
  z-index: 2;
  display: flex;
  font-size: 12px;
  background: #333;
}

.cmd-tabs a {
  line-height: 21px;
  height: 22px;
  padding-left: 1px;
  text-align: center;
  white-space: nowrap;
  background: #333;
  border-right: 1px solid #8a8a8a;
  border-bottom: 1px solid #8a8a8a;
}

.cmd-tabs .current {
  font-weight: bold;
  background: #4a4a4a;
}

.t56 {
  width: 56px;
}

.t60 {
  width: 60px;
}

.cmd-tabs .t60:first-child {
  width: 61px;
}

.t76 {
  width: 76px;
}

.t78 {
  width: 78px;
}

.t83 {
  width: 83px;
}

.t95 {
  width: 95px;
}

.panel {
  grid-column: 1;
  grid-row: 2;
  display: flex;
  flex-direction: column;
  min-width: 0;
  padding-right: 2px;
  background: #4a4a4a;
  border-left: 1px solid #222;
  border-right: 1px solid #8a8a8a;
}

.panel-top {
  height: 16px;
  margin: 4px 0;
  padding-right: 2px;
  flex: none;
  display: flex;
  align-items: center;
  justify-content: center;
  border-top: 1px solid #8a8a8a;
  border-bottom: 1px solid #8a8a8a;
}

.panel-tabs {
  height: 26px;
  flex: none;
  display: flex;
  padding-left: 2px;
}

.panel-tabs button {
  width: 40px;
  background: #333;
  border: 1px solid #8a8a8a;
  border-left: 0;
}

.panel-tabs .current {
  background: none;
  border-bottom: 0;
}

.filter {
  height: 26px;
  margin: 0 3px 0 5px;
  flex: none;
  display: flex;
  align-items: center;
  background: #565656;
  border: 1px solid #8a8a8a;
}

.filter input {
  flex: 1;
  min-width: 0;
  background: none;
  border: 0;
}

.filter .ico {
  width: 18px;
  height: 18px;
  margin-left: 1px;
}

.tree {
  flex: 1;
  min-height: 0;
  overflow: hidden;
  border-left: 1px solid #999;
}

.tree li {
  position: relative;
  height: 22px;
  padding-left: 25px;
  display: flex;
  align-items: center;
  gap: 4px;
  white-space: nowrap;
  overflow: hidden;
}

.tree .root {
  padding-left: 2px;
}

.tree .open::before {
  content: "";
  position: absolute;
  left: 9px;
  border: 4px solid transparent;
  border-left: 5px solid #fff;
  border-right: 0;
}

.tree .after-bar {
  padding-bottom: 2px;
  border-top: 2px solid #c3bfe0;
}

.hscroll {
  height: 17px;
  flex: none;
  display: flex;
  background: #f0f0f0;
}

.hscroll button {
  width: 17px;
}

.hscroll .thumb {
  width: 132px;
  margin-right: auto;
  background: #cdcdcd;
}

.panel-foot {
  height: 5px;
  flex: none;
  border-bottom: 2px solid #8a8a8a;
}

/* graphics area */
.viewport {
  grid-column: 2;
  grid-row: 1 / 3;
  position: relative;
  background:
    radial-gradient(ellipse 90% 56% at 0% 0%, #fff 45%, rgba(255, 255, 255, 0) 100%),
    radial-gradient(ellipse 30% 60% at 100% 0%, rgba(250, 250, 252, 0.8) 0%, rgba(255, 255, 255, 0) 100%),
    linear-gradient(180deg, #dfe2ee 0%, #d9dde8 42%, #e0e3ec 51%, #fdfdfd 68%, #fcfcfd 100%);
}

.splitter {
  position: absolute;
  left: -1px;
  top: 408px;
  width: 8px;
  height: 38px;
  display: flex;
  align-items: center;
  justify-content: center;
  background: #4a4a4a;
}

.splitter .knob {
  width: 6px;
  height: 6px;
}

.heads-up {
  display: flex;
  justify-content: center;
  padding: 5px 4px 0 0;
}

.heads-up button {
  width: 26px;
  height: 20px;
}

.heads-up .caret {
  width: 14px;
}

.heads-up .caret::after {
  border-top-color: #888;
}

.doc-buttons {
  position: absolute;
  right: 5px;
  top: 5px;
  display: flex;
  color: #888;
}

.doc-buttons button {
  width: 26px;
}

.confirm {
  position: absolute;
  right: 31px;
  top: 32px;
}

.profile {
  position: absolute;
  inset: 200px 434px 100px 367px;
  background: rgba(0, 0, 0, 0.3);
  border: 2px solid #0000f0;
}

.dot {
  position: absolute;
  width: 4px;
  height: 4px;
  background: #0000d0;
}

.tl { left: -3px; top: -3px; }
.tr { right: -3px; top: -3px; }
.bl { left: -3px; bottom: -3px; }
.br { right: -3px; bottom: -3px; }

.rel {
  position: absolute;
  width: 12px;
  height: 12px;
}

.rel.h {
  left: calc(50% - 6px);
  background: linear-gradient(#55a9ff 5px, #111 5px, #111 7px, #55a9ff 7px);
}

.rel.v {
  top: 270px;
  background: linear-gradient(90deg, #55a9ff 5px, #111 5px, #111 7px, #55a9ff 7px);
}

.rel.top { top: 7px; }
.rel.bottom { bottom: -22px; }
.rel.left { left: 7px; }
.rel.right { right: -20px; }

.origin {
  position: absolute;
  left: 338px;
  top: 267px;
}

.triad {
  position: absolute;
  left: 32px;
  bottom: 46px;
}

.axis {
  position: absolute;
  font-size: 10px;
}

.axis.y {
  left: 38px;
  bottom: 90px;
  color: #1fe01f;
}

.axis.x {
  left: 74px;
  bottom: 54px;
  color: #f22;
}

.view-name {
  position: absolute;
  left: 11px;
  bottom: 2px;
  font: bold 13px Lato, sans-serif;
  color: #111;
}

.task-pane {
  position: absolute;
  right: 0;
  top: 75px;
  width: 25px;
  background: #333;
  border: 1px solid #8a8a8a;
  border-right: 0;
}

.task-pane button {
  width: 24px;
  height: 24px;
  border-bottom: 1px solid #8a8a8a;
}

.task-pane .ico {
  width: 18px;
  height: 18px;
}

.task-pane .lit {
  background: #b5b5b5;
}

/* model / motion tabs */
.sheet-tabs {
  height: 15px;
  flex: none;
  display: flex;
  border-top: 1px solid #8a8a8a;
  font-size: 12px;
  line-height: 12px;
}

.sheet-blank {
  width: 28px;
  background: #b5b5b5;
}

.sheet-nav {
  display: flex;
}

.sheet-nav button {
  width: 16px;
  background: #a8a8a8;
  border: 1px solid #8a8a8a;
}

.model {
  width: 57px;
  padding-left: 4px;
  text-align: center;
  font-weight: bold;
}

.motion {
  width: 108px;
  padding-left: 8px;
  background: #333;
  border-left: 1px solid #8a8a8a;
  border-right: 1px solid #8a8a8a;
}

/* selection filter toolbar */
.filter-bar {
  height: 34px;
  flex: none;
  display: flex;
  align-items: center;
  padding: 3px 0 0 4px;
  border-bottom: 1px solid #8a8a8a;
}

.filter-bar button {
  width: 27px;
  height: 26px;
}

.grip {
  width: 2px;
  height: 27px;
  background: repeating-linear-gradient(#ddd 0 2px, transparent 2px 4px);
}

.filter-bar .first {
  margin-left: 9px;
}

.filter-bar .select-box {
  height: 26px;
  width: 42px;
  margin: 0;
}

.filter-bar .select-box .caret {
  width: 13px;
  height: 24px;
  background: #3c3c3c;
}

.bar-rule {
  width: 1px;
  height: 22px;
  margin: 0 5px 0 3px;
  background: #8a8a8a;
}

.bar-rule.tall {
  height: 30px;
}

.bar-rule.gap {
  margin-left: 6px;
}

/* status bar */
.status {
  height: 18px;
  flex: none;
  display: flex;
  align-items: center;
  padding-left: 2px;
  padding-right: 3px;
}

.hint {
  margin-right: auto;
}

.s58 { width: 58px; }
.s46 { width: 46px; }
.s36 { width: 36px; }
.s94 { width: 94px; }
.s103 { width: 103px; }

.status i {
  width: 1px;
  height: 16px;
  background: #ddd;
}

.units {
  width: 38px;
  margin-left: 105px;
}

.unit-caret {
  width: 20px;
  margin-right: 20px;
}

.unit-caret::after {
  content: "";
  border: 3px solid transparent;
  border-bottom: 3px solid #f0f0f0;
  border-top: 0;
}

/* windows taskbar */
.taskbar {
  height: 41px;
  flex: none;
  display: flex;
  background: #212121;
  border-bottom: 1px solid #000;
}

.start {
  width: 49px;
}

.os-search {
  width: 288px;
  display: flex;
  align-items: center;
  padding: 0 3px 0 11px;
  background: #333;
  border: 1px solid #5c5c5c;
}

.os-search input {
  flex: 1;
  min-width: 0;
  padding: 0 0 0 8px;
  background: none;
  border: 0;
  font: inherit;
  font-size: 14px;
  color: #ddd;
}

.os-search input::placeholder {
  color: #ddd;
}

.pill {
  width: 72px;
  height: 32px;
  display: flex;
  align-items: center;
  justify-content: center;
  background: #484848;
  border-radius: 8px;
}

.apps {
  display: flex;
  padding-left: 1px;
}

.apps button {
  width: 49px;
}

.app-ico {
  width: 24px;
  height: 24px;
}

.apps .running {
  background: #505050;
  border-bottom: 2px solid #c8c8c8;
}

.tray {
  margin-left: auto;
  display: flex;
  align-items: center;
}

.temp,
.sky {
  font-size: 13px;
}

.temp {
  margin: 0 10px 0 8px;
}

.sky {
  margin-right: 20px;
}

.tray button {
  width: 23px;
}

.clock {
  width: 68px;
  text-align: center;
  line-height: 18px;
}

.tray .notify {
  position: relative;
  width: 50px;
  height: 40px;
  justify-content: flex-start;
  padding-left: 10px;
}

.count {
  position: absolute;
  left: 16px;
  top: 14px;
  width: 18px;
  height: 18px;
  line-height: 16px;
  border: 1px solid #999;
  border-radius: 50%;
  background: #333;
  text-align: center;
}
```
